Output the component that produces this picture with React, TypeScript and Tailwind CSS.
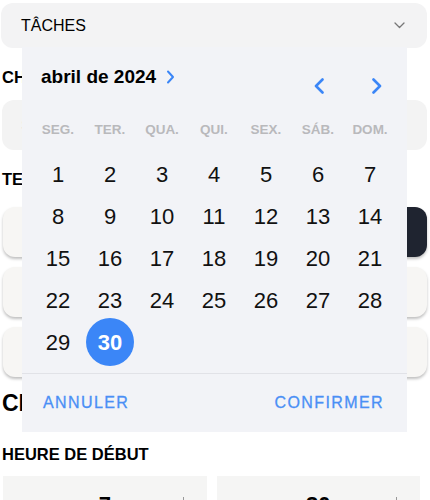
import React from "react";

const days: (number | null)[] = [
  1, 2, 3, 4, 5, 6, 7,
  8, 9, 10, 11, 12, 13, 14,
  15, 16, 17, 18, 19, 20, 21,
  22, 23, 24, 25, 26, 27, 28,
  29, 30, null, null, null, null, null,
];

const weekdays = ["SEG.", "TER.", "QUA.", "QUI.", "SEX.", "SÁB.", "DOM."];

function SmallChevronRight() {
  return (
    <svg width="9" height="14" viewBox="0 0 9 14" fill="none">
      <path d="M2 1.5 L7 7 L2 12.5" stroke="#3b86f7" strokeWidth="2" strokeLinecap="round" strokeLinejoin="round" />
    </svg>
  );
}

function NavChevron({ dir }: { dir: "left" | "right" }) {
  return (
    <svg width="12" height="16" viewBox="0 0 12 16" fill="none">
      {dir === "left" ? (
        <path d="M9.5 1.5 L3 8 L9.5 14.5" stroke="#3b86f7" strokeWidth="2.6" strokeLinecap="round" strokeLinejoin="round" />
      ) : (
        <path d="M2.5 1.5 L9 8 L2.5 14.5" stroke="#3b86f7" strokeWidth="2.6" strokeLinecap="round" strokeLinejoin="round" />
      )}
    </svg>
  );
}

export default function App() {
  return (
    <div
      className="relative w-[430px] h-[500px] overflow-hidden bg-white text-black"
      style={{ fontFamily: '"Liberation Sans", Arial, sans-serif' }}
    >
      {/* Background form */}
      <div className="flex flex-col pl-[2px] pr-[3px]">
        <div className="mt-[3px] -ml-[1px] h-[45px] rounded-[12px] bg-[#f3f3f4] flex items-center justify-between pl-[20px] pr-[22px]">
          <span className="text-[16px] leading-[20px]">TÂCHES</span>
          <svg width="11" height="7" viewBox="0 0 11 7" fill="none">
            <path d="M1 1 L5.5 5.5 L10 1" stroke="#777" strokeWidth="1.3" strokeLinecap="round" strokeLinejoin="round" />
          </svg>
        </div>

        <div className="mt-[19px] text-[16.5px] leading-[20px] font-bold">CHOISIR UNE DATE</div>

        <div className="mt-[13px] h-[50px] rounded-[12px] bg-[#f3f3f3] flex items-center pl-[19px]">
          <span className="text-[15px] text-[#c4c4c4]">Sélectionner une date</span>
        </div>

        <div className="mt-[19px] text-[16.5px] leading-[20px] font-bold">TEMPS</div>

        <div className="mt-[18px] pl-[1px] flex flex-col gap-[10px]">
          <div className="grid grid-cols-2 gap-[10px]">
            <div className="h-[50px] rounded-[12px] bg-[#f7f6f4] shadow-[0_2px_3px_rgba(0,0,0,0.25)]" />
            <div className="h-[50px] rounded-[12px] bg-[#1f2430] shadow-[0_2px_3px_rgba(0,0,0,0.25)]" />
          </div>
          <div className="h-[50px] rounded-[12px] bg-[#f7f6f4] shadow-[0_2px_3px_rgba(0,0,0,0.25)]" />
          <div className="h-[50px] rounded-[12px] bg-[#f7f6f4] shadow-[0_2px_3px_rgba(0,0,0,0.25)]" />
        </div>

        <div className="mt-[12px] text-[23px] leading-[28px] font-bold">CHOISIR L'HEURE</div>

        <div className="mt-[27px] text-[16.5px] leading-[20px] font-bold">HEURE DE DÉBUT</div>

        <div className="mt-[12px] pl-[1px] grid grid-cols-2 gap-[10px] w-[418px]">
          <div className="h-[60px] bg-[#f5f5f4] relative flex justify-center pt-[15px]">
            <span className="text-[22px] leading-[28px] font-bold">7</span>
            <span className="absolute right-[23px] top-[21px] w-[1px] h-[6px] bg-[#999]" />
          </div>
          <div className="h-[60px] bg-[#f5f5f4] relative flex justify-center pt-[15px]">
            <span className="text-[22px] leading-[28px] font-bold">30</span>
            <span className="absolute right-[23px] top-[21px] w-[1px] h-[6px] bg-[#999]" />
          </div>
        </div>
      </div>

      {/* Date picker popover */}
      <div className="absolute left-[22px] top-[47px] w-[385px] h-[385px] bg-[#f2f3f7] flex flex-col">
        <div className="h-[72px] flex items-start justify-between pl-[19px] pr-[24px] pt-[18px]">
          <div className="flex items-center gap-[10px] h-[24px]">
            <span className="text-[19px] leading-[24px] font-bold">abril de 2024</span>
            <SmallChevronRight />
          </div>
          <div className="mt-[13px] flex items-center gap-[46px]">
            <NavChevron dir="left" />
            <NavChevron dir="right" />
          </div>
        </div>

        <div className="ml-[10px] w-[364px] grid grid-cols-7 h-[20px] mt-[1px]">
          {weekdays.map((w) => (
            <div key={w} className="flex items-center justify-center text-[13.5px] font-bold text-[#b9b9bc]">
              {w}
            </div>
          ))}
        </div>

        <div className="mt-[13px] ml-[10px] w-[364px] grid grid-cols-7">
          {days.map((d, i) => (
            <div key={i} className="h-[42px] flex items-center justify-center">
              {d === 30 ? (
                <div className="w-[48px] h-[48px] shrink-0 rounded-full bg-[#3b86f7] flex items-center justify-center text-white text-[22px] font-bold">
                  30
                </div>
              ) : d !== null ? (
                <span className="text-[22px] text-[#111]">{d}</span>
              ) : null}
            </div>
          ))}
        </div>

        <div className="mt-[10px] h-[1px] bg-[#e1e2e7]" />

        <div className="h-[58px] flex items-center justify-between pl-[21px] pr-[23px]">
          <span className="text-[16px] tracking-[1.4px] text-[#4a8ff5] [-webkit-text-stroke:0.3px_#4a8ff5]">ANNULER</span>
          <span className="text-[16px] tracking-[1.4px] text-[#4a8ff5] [-webkit-text-stroke:0.3px_#4a8ff5]">CONFIRMER</span>
        </div>
      </div>
    </div>
  );
}
